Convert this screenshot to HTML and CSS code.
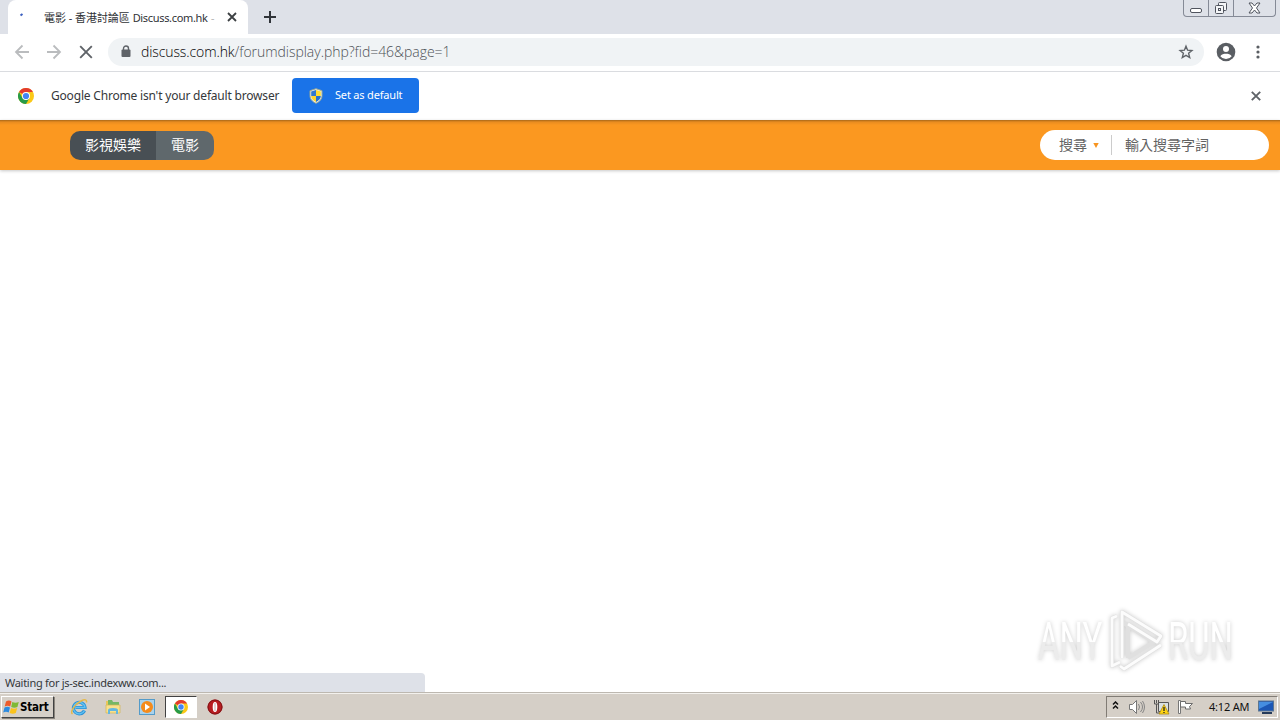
FILE: index.html
```
<!DOCTYPE html>
<html lang="zh-HK">
<head>
<meta charset="utf-8">
<meta name="viewport" content="width=device-width, initial-scale=1">
<title>電影 - 香港討論區 Discuss.com.hk</title>
<link rel="stylesheet" href="styles.css">
</head>
<body>

<div class="tabstrip">
  <div class="tab">
    <svg class="spinner" width="16" height="16" viewBox="0 0 16 16"><path d="M4.500 6.500l2-1.500" stroke="#3b5fc0" stroke-width="2"/></svg>
    <div class="tab-title"><span class="tab-zh">電影 - 香港討論區</span> <span class="tab-en">Discuss.com.hk <i>-</i></span></div>
    <svg class="tab-close" width="10" height="10" viewBox="0 0 10 10"><path d="M1 1l8 8M9 1l-8 8" stroke="#3c4043" stroke-width="1.8"/></svg>
  </div>
  <svg class="new-tab" width="12" height="12" viewBox="0 0 12 12"><path d="M6 0v12M0 6h12" stroke="#303439" stroke-width="2"/></svg>
  <div class="window-buttons">
    <span class="wb wb-min"><svg width="13" height="6" viewBox="0 0 13 6"><rect x=".5" y=".5" width="11" height="4" rx="1.5" fill="#fff" stroke="#50545e"/></svg></span>
    <span class="wb wb-max"><svg width="14" height="14" viewBox="0 0 14 14" fill="#f4f5f7" stroke="#50545e"><rect x="4.500" y="1.500" width="8" height="8" rx="1"/><rect x="1.500" y="4.500" width="8" height="8" rx="1"/><rect x="4.500" y="7.500" width="2" height="2"/></svg></span>
    <span class="wb wb-close"><svg width="13" height="12" viewBox="0 0 13 12"><path d="M1 1h3l2.500 3 2.500-3h3L8.500 6l3.500 5H9L6.500 8 4 11H1l3.500-5z" fill="#fff" stroke="#50545e"/></svg></span>
  </div>
</div>

<div class="toolbar">
  <svg class="nav" width="16" height="16" viewBox="0 0 16 16"><path d="M15 8H2M8.500 1.500L2 8l6.500 6.500" fill="none" stroke="#babcbe" stroke-width="1.800"/></svg>
  <svg class="nav" width="16" height="16" viewBox="0 0 16 16"><path d="M1 8h13M7.500 1.500L14 8l-6.500 6.500" fill="none" stroke="#babcbe" stroke-width="1.800"/></svg>
  <svg class="nav" width="16" height="16" viewBox="0 0 16 16"><path d="M2.200 2.200l11.600 11.600M13.800 2.200L2.200 13.800" stroke="#5f6368" stroke-width="1.900"/></svg>
  <div class="omnibox">
    <svg class="lock" width="10" height="13" viewBox="0 0 10 13"><path d="M2.500 5V3.500a2.500 2.500 0 0 1 5 0V5" fill="none" stroke="#5f6368" stroke-width="1.400"/><rect x=".5" y="4.500" width="9" height="7.500" rx="1" fill="#5f6368"/></svg>
    <div class="url"><b>discuss.com.hk</b>/forumdisplay.php?fid=46&amp;page=1</div>
    <svg class="star" width="16" height="16" viewBox="0 0 16 16"><path d="M8 2.200l1.600 4 4.300.3-3.300 2.800 1.100 4.300L8 11.300l-3.700 2.300 1.100-4.300-3.300-2.800 4.300-.3z" fill="none" stroke="#5f6368" stroke-width="1.400"/></svg>
  </div>
  <svg class="avatar" width="20" height="20" viewBox="0 0 20 20"><circle cx="10" cy="10" r="9.300" fill="#5a5e63"/><circle cx="10" cy="7" r="3" fill="#fff"/><path d="M4.300 14.200C5.300 12.400 8 11.800 10 11.800s4.700.6 5.700 2.400A7 7 0 0 1 10 17a7 7 0 0 1-5.700-2.800z" fill="#fff"/></svg>
  <svg class="menu-dots" width="4" height="14" viewBox="0 0 4 14" fill="#5a5e63"><circle cx="2" cy="2" r="1.600"/><circle cx="2" cy="7" r="1.600"/><circle cx="2" cy="12" r="1.600"/></svg>
</div>

<div class="infobar">
  <svg width="16" height="16" viewBox="0 0 16 16"><use href="#chrome"/></svg>
  <span class="infobar-text">Google Chrome isn't your default browser</span>
  <button class="set-default">
    <svg width="14" height="16" viewBox="0 0 14 16"><path d="M7 .7l6 2v5c0 3.400-2.500 6-6 7.600C3.500 13.700 1 11.100 1 7.700v-5z" fill="#e9edf0" stroke="#9ba890" stroke-width="1"/><path d="M7 2v6H2.200V3.500z" fill="#3078cf"/><path d="M7 2l4.800 1.500V8H7z" fill="#ffdc32"/><path d="M2.200 8H7v6c-2.700-1.400-4.800-3.300-4.800-6z" fill="#ffd52c"/><path d="M7 8h4.800c0 2.700-2 4.600-4.800 6z" fill="#2671cb"/></svg>
    <span>Set as default</span>
  </button>
  <svg class="infobar-close" width="10" height="10" viewBox="0 0 10 10"><path d="M.8.8l8.400 8.400M9.200.8L.8 9.200" stroke="#5f6368" stroke-width="1.900"/></svg>
</div>

<header class="site-header">
  <nav class="crumbs">
    <a class="crumb crumb-parent">影視娛樂</a>
    <a class="crumb">電影</a>
  </nav>
  <div class="search">
    <span class="search-type">搜尋</span>
    <svg class="caret" width="6" height="5" viewBox="0 0 6 5"><path d="M.3 0h5.400L3 5z" fill="#f7941f"/></svg>
    <span class="search-input">輸入搜尋字詞</span>
  </div>
</header>

<main class="page">
  <div class="status">Waiting for js-sec.indexww.com...</div>
  <div class="watermark">
    <span class="wm-word wm-any">ANY</span>
    <svg width="58" height="64" viewBox="0 0 58 64"><g fill="none" stroke-linejoin="round"><path d="M9 8L4 10v48l8-4M14 50V4l39 24-4 6-29-18v34M14 14l33 21M20 50l32-20M12 58l4 3 37-24" stroke="#e0e0e0" stroke-width="4"/><path d="M9 8L4 10v48l8-4M14 50V4l39 24-4 6-29-18M12 58l4 3 37-24" stroke="#fcfcfc" stroke-width="2.800"/></g></svg>
    <span class="wm-word wm-run">RUN</span>
  </div>
</main>

<div class="taskbar">
  <div class="start">
    <svg width="17" height="16" viewBox="0 0 17 16"><path d="M3 2.500Q6 .7 8.500 2.500L7.200 7.500Q4.500 6 1.700 7.500z" fill="#ed5b2b"/><path d="M9.300 3q3 1.600 6.500 0l-1.400 5q-3 1.500-6.200 0z" fill="#7fb935"/><path d="M1.500 8.500q3-1.600 5.500 0l-1.300 5q-2.700-1.600-5.500 0z" fill="#2c8be0"/><path d="M8 9q3 1.500 6.200 0l-1.400 5q-3 1.500-6.100 0z" fill="#fbc31c"/></svg>
    <b>Start</b>
  </div>
  <div class="launch">
    <svg width="18" height="18" viewBox="0 0 18 18"><path d="M14.500 12.500A5.800 5.800 0 1 1 15 9.500H5.500" fill="none" stroke="#2d92d6" stroke-width="3.200"/><path d="M14.500 12.500A5.800 5.800 0 1 1 15 9.500H5.500" fill="none" stroke="#62c3f3" stroke-width="1.400"/><path d="M2.500 16C-.5 14 5 6 11 3c4-2 6-1.500 5.500 1.500" fill="none" stroke="#e5b94a" stroke-width="1.500"/></svg>
  </div>
  <div class="launch">
    <svg width="18" height="18" viewBox="0 0 18 18"><path d="M2 3h5l1 2h7v9H2z" fill="#e9c759"/><path d="M4 2h4l1 2h6v4H4z" fill="#75b765"/><path d="M2 7h14v8H2z" fill="#f8e18c" stroke="#d4b553" stroke-width=".7"/><path d="M4 16v-4q0-2 5-2t5 2v4h-2v-3H6v3z" fill="#64b7df"/></svg>
  </div>
  <div class="launch">
    <svg width="18" height="18" viewBox="0 0 18 18"><rect x="1.500" y="1.500" width="15" height="15" fill="#a9d2ec" stroke="#549bc9"/><circle cx="9" cy="9" r="6" fill="#f58b1c"/><path d="M7 5.500l5 3.500-5 3.500z" fill="#fff"/></svg>
  </div>
  <div class="launch active">
    <svg width="14" height="14" viewBox="0 0 16 16">
      <g id="chrome"><circle cx="8" cy="8" r="8" fill="#fbc817"/><path d="M8 8L1.070 4A8 8 0 0 1 14.930 4H8z" fill="#e33b2e"/><path d="M1.070 4A8 8 0 0 0 8 16l3.500-6L8 8 4.500 10z" fill="#279b48"/><circle cx="8" cy="8" r="4" fill="#fff"/><circle cx="8" cy="8" r="3.100" fill="#4285f4"/></g>
    </svg>
  </div>
  <div class="launch">
    <svg width="16" height="16" viewBox="0 0 16 16"><circle cx="8" cy="8" r="7.500" fill="#b81c20"/><circle cx="8" cy="8" r="7" fill="none" stroke="#7d1416"/><ellipse cx="8" cy="8" rx="2.300" ry="5" fill="#fff"/><path d="M8 4v8" stroke="#c9a5a5" stroke-width="1"/></svg>
  </div>
  <div class="tray">
    <svg class="chevrons" width="7" height="9" viewBox="0 0 7 9"><path d="M1 3.500L3.500 1 6 3.500M1 7.500L3.500 5 6 7.500" fill="none" stroke="#111" stroke-width="1.500"/></svg>
    <svg class="volume" width="18" height="16" viewBox="0 0 18 16"><path d="M1.500 5.500h3l4-4v13l-4-4h-3z" fill="#fff" stroke="#777"/><path d="M10.500 5q2 3 0 6M12.500 3q4 5 0 10M14.500 2q4 6 0 12" fill="none" stroke="#858585"/></svg>
    <svg width="17" height="16" viewBox="0 0 17 16"><path d="M5.500 3.500h10v9h-10z" fill="#d9dfe1" stroke="#555"/><path d="M1.500 1v4h4V1M3.500 1v3M3.500 5v9H7" fill="none" stroke="#555"/><path d="M11 5.500l5 9.500H6z" fill="#ffd512" stroke="#ad8a13" stroke-width=".8"/><path d="M11 8v4M11 13v1" stroke="#222" stroke-width="1.300"/></svg>
    <svg width="17" height="16" viewBox="0 0 17 16"><path d="M1.500 1.500h2v13h-2z" fill="#fff" stroke="#777"/><path d="M3.500 2.500h5v2h7l-3 3 1 2.500h-5v-2h-5z" fill="#fff" stroke="#6c6c6c"/></svg>
    <span class="clock">4:12 AM</span>
    <svg width="16" height="14" viewBox="0 0 16 14"><rect x=".5" y="1" width="15" height="10" fill="#1c57b5" stroke="#5c7691"/><path d="M1 2h14L1 9z" fill="#458ee1"/><path d="M4 13h10" stroke="#263b59" stroke-width="2"/></svg>
  </div>
</div>

</body>
</html>
```
FILE: styles.css
```
* {
  box-sizing: border-box;
}

body {
  margin: 0;
  height: 720px;
  overflow: hidden;
  display: flex;
  flex-direction: column;
  background: #fff;
  font-family: "Noto Sans", "Noto Sans CJK TC", sans-serif;
  white-space: nowrap;
}

svg {
  display: block;
  flex: none;
}

/* Browser tabs */
.tabstrip {
  flex: none;
  height: 34px;
  display: flex;
  align-items: flex-start;
  padding-left: 8px;
  background: #dee1e8;
}

.tab {
  width: 240px;
  height: 34px;
  display: flex;
  align-items: center;
  padding-left: 8px;
  background: #fff;
  border-radius: 8px 8px 0 0;
}

.tab-title {
  width: 176px;
  margin: -1px 0 0 12px;
  font-size: 11px;
  color: #303236;
}

.tab-zh {
  letter-spacing: -0.05px;
}

.tab-en {
  letter-spacing: -0.33px;
}

.tab-en i {
  margin-left: 1px;
  color: #bbb;
}

.tab-close {
  margin-left: 7px;
}

.new-tab {
  margin: 11px 0 0 16px;
}

.window-buttons {
  width: 93px;
  height: 17px;
  margin: 0 4px 0 auto;
  display: flex;
  border: 1px solid #858a96;
  border-top: 0;
  border-radius: 0 0 4px 4px;
}

.wb {
  display: flex;
  align-items: center;
  justify-content: center;
}

.wb-min {
  width: 24px;
  padding-top: 5px;
}

.wb-max {
  width: 25px;
  border-left: 1px solid #858a96;
}

.wb-close {
  flex: 1;
  border-left: 1px solid #858a96;
}

/* Address bar */
.toolbar {
  flex: none;
  height: 38px;
  display: flex;
  align-items: center;
  padding: 0 20px 2px 14px;
  border-bottom: 1px solid #dadce0;
}

.nav {
  margin-right: 16px;
}

.omnibox {
  width: 1096px;
  height: 28px;
  margin-left: -2px;
  display: flex;
  align-items: center;
  padding: 0 10px 0 13px;
  background: #f0f3f5;
  border-radius: 14px;
}

.url {
  margin-left: 10px;
  font-family: "Open Sans", sans-serif;
  font-weight: 300;
  font-size: 14px;
  letter-spacing: -0.04px;
  color: #4d5156;
}

.url b {
  font-weight: 300;
  letter-spacing: -0.1px;
  color: #000;
}

.star {
  margin-left: auto;
}

.avatar {
  margin-left: 12px;
}

.menu-dots {
  margin-left: auto;
}

/* Default browser prompt */
.infobar {
  flex: none;
  height: 48px;
  display: flex;
  align-items: center;
  padding: 0 19px 0 18px;
}

.infobar-text {
  width: 229px;
  margin: -1px 12px 0 17px;
  font-size: 12px;
  letter-spacing: -0.19px;
  color: #35373a;
}

.set-default {
  width: 127px;
  height: 35px;
  display: flex;
  align-items: center;
  margin-bottom: 1px;
  padding: 0 0 0 17px;
  gap: 12px;
  border: none;
  border-radius: 4px;
  background: #1a73e8;
  color: #fff;
  font-family: inherit;
  font-size: 11px;
  letter-spacing: -0.18px;
}

.set-default span {
  margin-top: -2px;
}

.infobar-close {
  margin-left: auto;
}

/* Forum header */
.site-header {
  position: relative;
  flex: none;
  height: 50px;
  display: flex;
  align-items: center;
  justify-content: space-between;
  padding: 0 11px 0 70px;
  background: linear-gradient(#a86718, #e88c20 2px, #fb9820 5px, #fb9820);
  box-shadow: 0 1px 3px rgba(0,0,0,0.22);
}

.crumbs {
  height: 29px;
  display: flex;
  overflow: hidden;
  border-radius: 10px;
  font-size: 14px;
  line-height: 28px;
  color: #fff;
}

.crumb {
  width: 58px;
  text-align: center;
  background: #5f686c;
}

.crumb-parent {
  width: 86px;
  background: #484f54;
}

.search {
  width: 229px;
  height: 30px;
  display: flex;
  align-items: center;
  padding-left: 19px;
  border-radius: 15px;
  background: #fff;
  font-size: 14px;
  line-height: 20px;
  color: #626262;
}

.caret {
  margin-left: 6px;
}

.search-input {
  margin-left: 12px;
  padding-left: 13px;
  border-left: 1px solid #ccc;
}

.page {
  position: relative;
  flex: 1;
}

/* Link status bubble over the page */
.status {
  position: absolute;
  left: 0;
  bottom: 0;
  width: 425px;
  height: 19px;
  padding-left: 5px;
  border-radius: 0 4px 0 0;
  background: #dee1e8;
  font-size: 11px;
  letter-spacing: -0.28px;
  line-height: 19px;
  color: #35373a;
}

/* Watermark over the page */
.watermark {
  position: absolute;
  left: 1038px;
  bottom: 20px;
  display: flex;
  align-items: center;
  filter: drop-shadow(0 0 2px rgba(0,0,0,0.2));
}

.wm-word {
  display: block;
  width: 110px;
  font-family: Roboto, sans-serif;
  font-size: 53px;
  line-height: 60px;
  transform: scaleX(0.62);
  transform-origin: left;
  background: linear-gradient(#fff 50%, #ececec 50%);
  background-clip: text;
  -webkit-background-clip: text;
  color: transparent;
}

.wm-any {
  margin: 4px -40px 0 0;
}

.wm-run {
  margin: 4px 0 0 2px;
  transform: scaleX(0.62);
}

/* Windows taskbar */
.taskbar {
  flex: none;
  height: 28px;
  display: flex;
  align-items: center;
  padding: 0 2px 0 1px;
  background: #d5cfc7;
  border-top: 1px solid #bdb8b0;
  box-shadow: inset 0 1px 0 #f3f1ed;
}

.start {
  width: 53px;
  height: 22px;
  margin-right: 9px;
  display: flex;
  align-items: center;
  padding-left: 1px;
  border: 1px solid;
  border-color: #fff #424242 #424242 #fff;
  box-shadow: 1px 1px 0 #8a857d;
  font-family: "DejaVu Sans Condensed", "DejaVu Sans", sans-serif;
  font-size: 11.5px;
  letter-spacing: -0.2px;
  color: #000;
}

.launch {
  width: 32px;
  height: 22px;
  margin-right: 2px;
  display: flex;
  align-items: center;
  justify-content: center;
}

.active {
  background: #fff;
  border: 1px solid;
  border-color: #424242 #fff #fff #424242;
}

.tray {
  width: 172px;
  height: 22px;
  margin-left: auto;
  display: flex;
  align-items: center;
  gap: 7px;
  padding-left: 5px;
  border: 1px solid;
  border-color: #817c75 #fff #fff #817c75;
}

.chevrons {
  margin-top: -2px;
}

.volume {
  margin-left: 2px;
}

.clock {
  width: 42px;
  margin-left: 8px;
  font-size: 11px;
  letter-spacing: -0.2px;
  color: #111;
}
```
